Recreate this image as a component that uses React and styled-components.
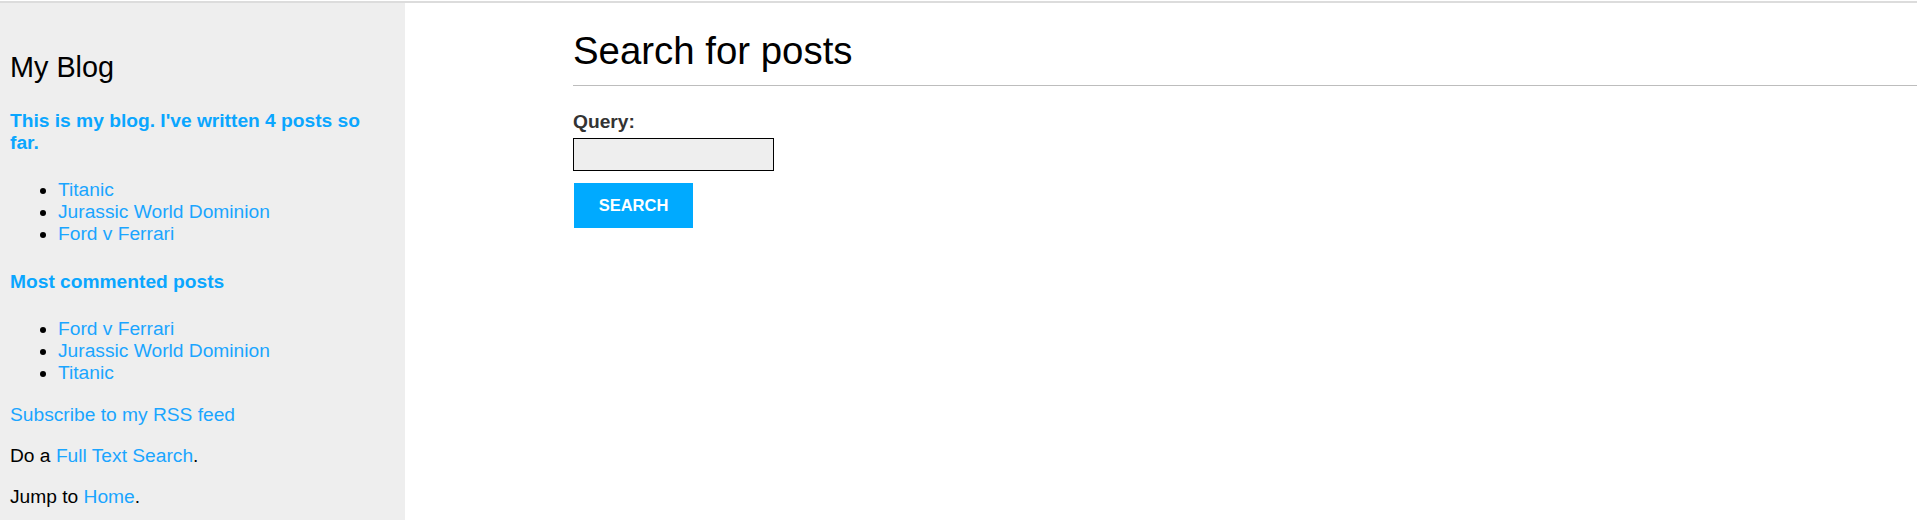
import React from 'react';
import styled, { createGlobalStyle } from 'styled-components';

const GlobalStyle = createGlobalStyle`
  body {
    margin: 0;
    font-family: "Liberation Sans", Arial, sans-serif;
    font-size: 19.2px;
    color: #000;
    background: #fff;
  }
`;

const TopRule = styled.div`
  height: 2px;
  margin-top: 1px;
  background: #dcdcdc;
`;

const Page = styled.div`
  display: grid;
  grid-template-columns: 405px 1fr;
  min-height: 517px;
`;

const Sidebar = styled.aside`
  background: #eee;
  padding: 24.6px 14px 0 10px;
`;

const BlogTitle = styled.h2`
  font-size: 28.8px;
  font-weight: normal;
  margin: 23.9px 0;
`;

const SideHeading = styled.h4`
  font-size: 19.2px;
  font-weight: bold;
  color: #0aa6ff;
  margin: 25.5px 0;
`;

const PostList = styled.ul`
  margin: 19.2px 0;
  padding-left: 48px;
`;

const A = styled.a`
  color: #1aa5ff;
  text-decoration: none;
`;

const Para = styled.p`
  margin: 19.2px 0;
`;

const Main = styled.main`
  padding-left: 168px;
`;

const PageTitle = styled.h1`
  font-size: 38.4px;
  font-weight: normal;
  margin: 25.6px 0;
  padding-bottom: 12px;
  border-bottom: 1px solid #bdbdbd;
`;

const Form = styled.form`
  display: flex;
  flex-direction: column;
  align-items: flex-start;
`;

const Label = styled.label`
  font-weight: bold;
  color: #333;
`;

const Input = styled.input`
  box-sizing: border-box;
  width: 201px;
  height: 33px;
  margin: 4.6px 0 0;
  border: 1px solid #000;
  background: #eee;
  font: inherit;
`;

const Button = styled.button`
  box-sizing: border-box;
  width: 119px;
  height: 45px;
  margin: 12.7px 0 0 1px;
  border: none;
  background: #00aaff;
  color: #fff;
  font-family: "Liberation Sans", Arial, sans-serif;
  font-size: 16.5px;
  font-weight: bold;
  text-transform: uppercase;
  cursor: pointer;
`;

const recent = ['Titanic', 'Jurassic World Dominion', 'Ford v Ferrari'];
const mostCommented = ['Ford v Ferrari', 'Jurassic World Dominion', 'Titanic'];

export default function App() {
  return (
    <>
      <GlobalStyle />
      <TopRule />
      <Page>
        <Sidebar>
          <BlogTitle>My Blog</BlogTitle>
          <SideHeading>This is my blog. I've written 4 posts so far.</SideHeading>
          <PostList>
            {recent.map((t) => (
              <li key={t}><A href="#">{t}</A></li>
            ))}
          </PostList>
          <SideHeading>Most commented posts</SideHeading>
          <PostList>
            {mostCommented.map((t) => (
              <li key={t}><A href="#">{t}</A></li>
            ))}
          </PostList>
          <Para><A href="#">Subscribe to my RSS feed</A></Para>
          <Para>Do a <A href="#">Full Text Search</A>.</Para>
          <Para>Jump to <A href="#">Home</A>.</Para>
        </Sidebar>
        <Main>
          <PageTitle>Search for posts</PageTitle>
          <Form onSubmit={(e) => e.preventDefault()}>
            <Label htmlFor="query">Query:</Label>
            <Input id="query" type="text" />
            <Button type="submit">Search</Button>
          </Form>
        </Main>
      </Page>
    </>
  );
}
